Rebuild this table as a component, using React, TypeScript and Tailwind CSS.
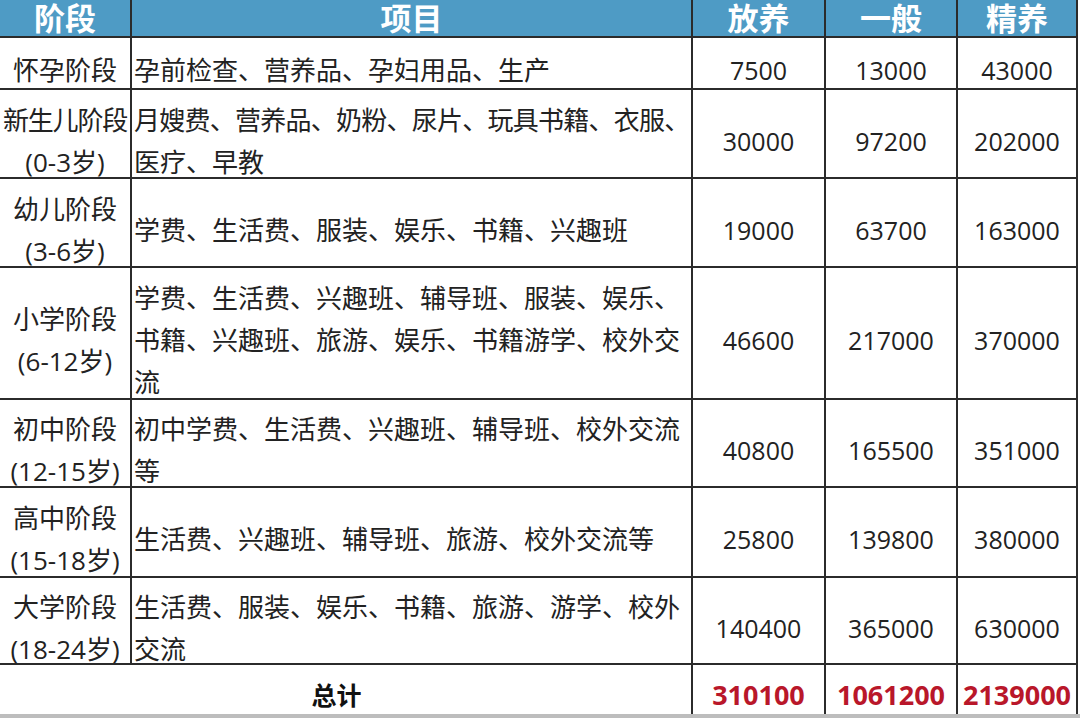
import React from "react";

const font = { fontFamily: '"Open Sans", "Noto Sans CJK SC", sans-serif' };

type Row = { stage: string[]; items: string[]; a: string; b: string; c: string };

const rows: Row[] = [
  { stage: ["怀孕阶段"], items: ["孕前检查、营养品、孕妇用品、生产"], a: "7500", b: "13000", c: "43000" },
  { stage: ["新生儿阶段", "(0-3岁)"], items: ["月嫂费、营养品、奶粉、尿片、玩具书籍、衣服、", "医疗、早教"], a: "30000", b: "97200", c: "202000" },
  { stage: ["幼儿阶段", "(3-6岁)"], items: ["学费、生活费、服装、娱乐、书籍、兴趣班"], a: "19000", b: "63700", c: "163000" },
  { stage: ["小学阶段", "(6-12岁)"], items: ["学费、生活费、兴趣班、辅导班、服装、娱乐、", "书籍、兴趣班、旅游、娱乐、书籍游学、校外交", "流"], a: "46600", b: "217000", c: "370000" },
  { stage: ["初中阶段", "(12-15岁)"], items: ["初中学费、生活费、兴趣班、辅导班、校外交流", "等"], a: "40800", b: "165500", c: "351000" },
  { stage: ["高中阶段", "(15-18岁)"], items: ["生活费、兴趣班、辅导班、旅游、校外交流等"], a: "25800", b: "139800", c: "380000" },
  { stage: ["大学阶段", "(18-24岁)"], items: ["生活费、服装、娱乐、书籍、旅游、游学、校外", "交流"], a: "140400", b: "365000", c: "630000" },
];

export default function App() {
  return (
    <div className="w-[1080px] h-[718px] bg-white overflow-hidden" style={font}>
      <div className="w-[1078px] bg-[#2b2b2b] pr-[2px] grid grid-cols-[130px_559px_131px_130px_118px] grid-rows-[36px_50px_87px_87px_130px_86px_88px_85px_49px] gap-[2px]">
        {["阶段", "项目", "放养", "一般", "精养"].map((h) => (
          <div key={h} className="bg-[#4e9bc5] text-white font-bold text-[31px] leading-[36px] flex items-center justify-center">
            {h}
          </div>
        ))}
        {rows.map((r, i) => (
          <React.Fragment key={i}>
            <div className="bg-white text-[#222] text-[26px] leading-[42px] flex flex-col items-center justify-center pt-[14px] whitespace-nowrap">
              {r.stage.map((s) => (
                <div key={s} className={s.length >= 5 && !s.startsWith("(") ? "tracking-[-1.2px]" : ""}>
                  {s}
                </div>
              ))}
            </div>
            <div className="bg-white text-[#222] text-[26px] leading-[42px] flex flex-col justify-center pl-[2px] pt-[14px] whitespace-nowrap">
              {r.items.map((s) => (
                <div key={s} className={s.length >= 22 ? "tracking-[-0.75px]" : ""}>
                  {s}
                </div>
              ))}
            </div>
            {[r.a, r.b, r.c].map((n, j) => (
              <div key={j} className="bg-white text-[#222] text-[25px] leading-[42px] flex items-center justify-center pt-[14px]">
                {n}
              </div>
            ))}
          </React.Fragment>
        ))}
        <div className="col-span-2 bg-white text-[#111] font-bold text-[25px] flex items-end justify-center pb-[2px] pr-[18px] leading-[34px]">
          总计
        </div>
        {["310100", "1061200", "2139000"].map((n) => (
          <div key={n} className="bg-white text-[#b9172a] font-bold text-[27px] flex items-end justify-center pb-[1px] leading-[36px]">
            {n}
          </div>
        ))}
      </div>
      <div className="h-[4px] bg-[#bdbdbd]" />
    </div>
  );
}
